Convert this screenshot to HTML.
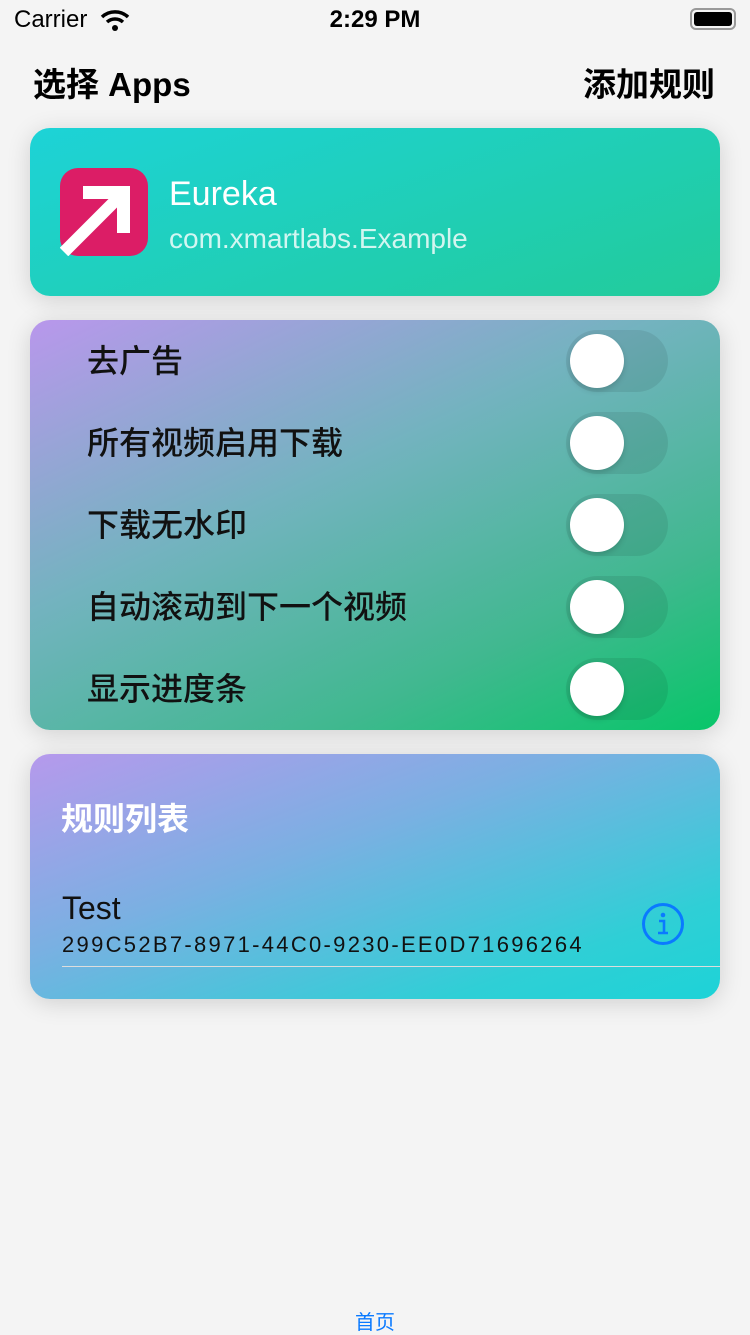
<!DOCTYPE html>
<html><head><meta charset="utf-8"><style>
*{margin:0;padding:0;box-sizing:border-box}
body{width:750px;height:1334px;background:#f4f4f4;font-family:"Liberation Sans","Noto Sans CJK SC",sans-serif;position:relative;overflow:hidden}
.abs{position:absolute}
.card{position:absolute;left:30px;width:690px;border-radius:20px;box-shadow:0 4px 24px rgba(0,0,0,0.15);overflow:hidden}
.row{position:absolute;left:57px;font-size:32px;color:#111;font-weight:500;line-height:40px}
.tg{position:absolute;left:536px;width:102px;height:62px;border-radius:31px;background:rgba(0,0,0,0.08)}
.tg i{position:absolute;left:4px;top:4px;width:54px;height:54px;border-radius:50%;background:#fff;box-shadow:0 3px 6px rgba(0,0,0,0.15)}
</style></head><body>
<div class="abs" style="left:14px;top:6px;font-size:24px">Carrier</div>
<svg class="abs" style="left:100px;top:9px" width="30" height="22" viewBox="0 0 30 22"><path d="M2 8a19 19 0 0 1 26 0" stroke="#000" stroke-width="3.5" fill="none"/><path d="M7 13a12 12 0 0 1 16 0" stroke="#000" stroke-width="3.5" fill="none"/><circle cx="15" cy="19" r="3" fill="#000"/></svg>
<div class="abs" style="left:0;width:750px;text-align:center;top:6px;font-size:24px;font-weight:bold">2:29 PM</div>
<div class="abs" style="left:690px;top:8px;width:46px;height:22px;border:2px solid #999;border-radius:6px"><div style="margin:2px;height:14px;background:#000;border-radius:3px"></div></div>
<div class="abs" style="left:33px;top:58px;font-size:33px;font-weight:bold">选择 Apps</div>
<div class="abs" style="right:35px;top:58px;font-size:33px;font-weight:bold">添加规则</div>

<div class="card" style="top:128px;height:168px;background:linear-gradient(160deg,#1dd3d7,#22cb9a)">
<svg class="abs" style="left:30px;top:40px" width="88" height="88" viewBox="0 0 88 88"><rect width="88" height="88" rx="18" fill="#dc1d66"/><path d="M4 84 L58 30" stroke="#fff" stroke-width="12"/><path d="M23 18 H70 V65 H57 V31 H23Z" fill="#fff"/></svg>
<div class="abs" style="left:139px;top:47px;font-size:34px;color:#fff">Eureka</div>
<div class="abs" style="left:139px;top:95px;font-size:28px;color:rgba(255,255,255,0.8)">com.xmartlabs.Example</div>
</div>

<div class="card" style="top:320px;height:410px;background:linear-gradient(155deg,#b997ec 0%,#73b3bf 40%,#40b88f 75%,#08c669 100%)">
<div class="row" style="top:21px">去广告</div><div class="tg" style="top:10px"><i></i></div>
<div class="row" style="top:103px">所有视频启用下载</div><div class="tg" style="top:92px"><i></i></div>
<div class="row" style="top:185px">下载无水印</div><div class="tg" style="top:174px"><i></i></div>
<div class="row" style="top:267px">自动滚动到下一个视频</div><div class="tg" style="top:256px"><i></i></div>
<div class="row" style="top:349px">显示进度条</div><div class="tg" style="top:338px"><i></i></div>
</div>

<div class="card" style="top:754px;height:245px;background:linear-gradient(160deg,#b699ec 0%,#7ab0e2 40%,#2fcfd6 80%,#1dd3d7 100%)">
<div class="abs" style="left:31px;top:40px;font-size:32px;color:#fff;font-weight:bold">规则列表</div>
<div class="abs" style="left:32px;top:136px;font-size:32px;color:#111">Test</div>
<div class="abs" style="left:32px;top:178px;font-size:22px;color:#111;letter-spacing:2.3px">299C52B7-8971-44C0-9230-EE0D71696264</div>
<div class="abs" style="left:32px;top:212px;width:658px;height:1px;background:#ddd"></div>
<svg class="abs" style="left:611px;top:148px" width="44" height="44" viewBox="0 0 44 44"><circle cx="22" cy="22" r="19.5" fill="none" stroke="#0a7aff" stroke-width="3"/><circle cx="22" cy="13" r="2.3" fill="#0a7aff"/><path d="M18 19h5v12M17 31h10" stroke="#0a7aff" stroke-width="2.6" fill="none"/></svg>
</div>

<div class="abs" style="left:0;width:750px;text-align:center;top:1306px;font-size:20px;color:#0a7aff">首页</div>
</body></html>
